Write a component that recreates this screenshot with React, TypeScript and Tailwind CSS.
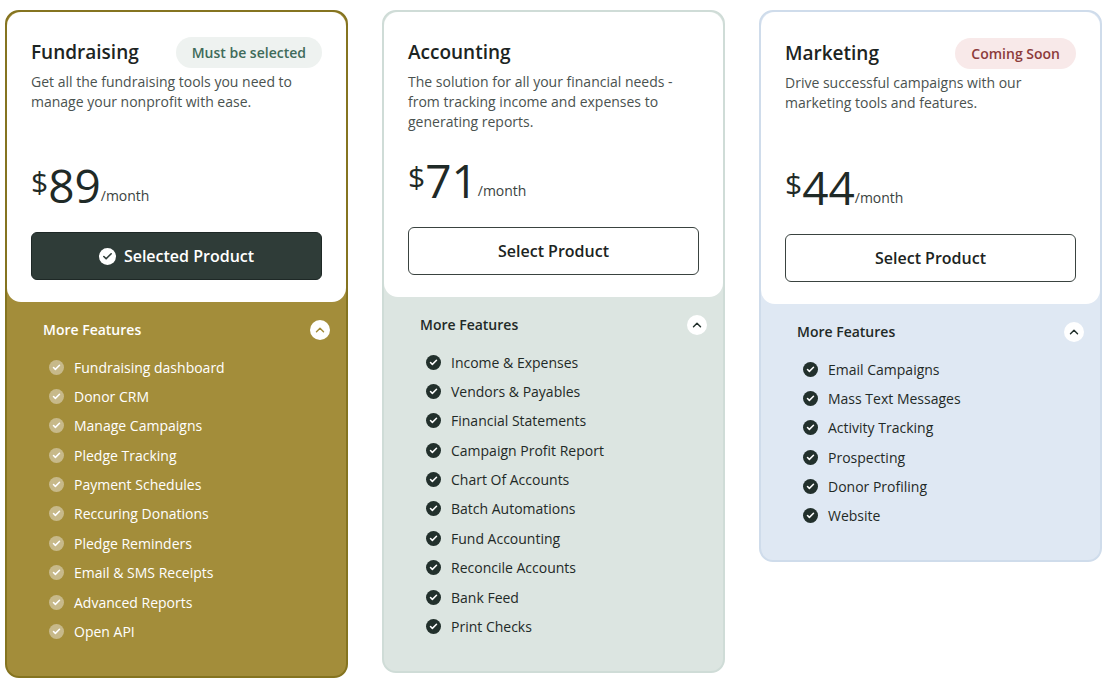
import { Check, ChevronUp } from 'lucide-react';

type Plan = {
  title: string;
  badge?: { text: string; cls: string };
  desc: string;
  price: string;
  selected?: boolean;
  features: string[];
  outer: string;
  white: string;
  heading: string;
  item: string;
  icon: string;
  iconCheck: string;
  chevron: string;
  pad: string;
};

const plans: Plan[] = [
  {
    title: 'Fundraising',
    badge: { text: 'Must be selected', cls: 'bg-[#eef2f0] text-[#3f6b5a]' },
    desc: 'Get all the fundraising tools you need to manage your nonprofit with ease.',
    price: '89',
    selected: true,
    features: ['Fundraising dashboard', 'Donor CRM', 'Manage Campaigns', 'Pledge Tracking', 'Payment Schedules', 'Reccuring Donations', 'Pledge Reminders', 'Email & SMS Receipts', 'Advanced Reports', 'Open API'],
    outer: 'bg-[#a38d3a] border-[#857420] h-[668px]',
    white: 'h-[290px] pt-[26px]',
    heading: 'text-white',
    item: 'text-white',
    icon: 'bg-[#c7b98a]',
    iconCheck: 'text-white',
    chevron: 'bg-white text-[#a38d3a]',
    pad: 'pt-[17px]',
  },
  {
    title: 'Accounting',
    desc: 'The solution for all your financial needs - from tracking income and expenses to generating reports.',
    price: '71',
    features: ['Income & Expenses', 'Vendors & Payables', 'Financial Statements', 'Campaign Profit Report', 'Chart Of Accounts', 'Batch Automations', 'Fund Accounting', 'Reconcile Accounts', 'Bank Feed', 'Print Checks'],
    outer: 'bg-[#dce5e1] border-[#cfdcd7] h-[663px]',
    white: 'h-[285px] pt-[26px]',
    heading: 'text-[#1f2a27]',
    item: 'text-[#1f2a27]',
    icon: 'bg-[#22302c]',
    iconCheck: 'text-white',
    chevron: 'bg-white text-[#22302c]',
    pad: 'pt-[17px]',
  },
  {
    title: 'Marketing',
    badge: { text: 'Coming Soon', cls: 'bg-[#f8e9e9] text-[#8c3b3b]' },
    desc: 'Drive successful campaigns with our marketing tools and features.',
    price: '44',
    features: ['Email Campaigns', 'Mass Text Messages', 'Activity Tracking', 'Prospecting', 'Donor Profiling', 'Website'],
    outer: 'bg-[#dfe8f3] border-[#cfdceb] h-[552px]',
    white: 'h-[292px] pt-[27px]',
    heading: 'text-[#1f2a27]',
    item: 'text-[#1f2a27]',
    icon: 'bg-[#22302c]',
    iconCheck: 'text-white',
    chevron: 'bg-white text-[#22302c]',
    pad: 'pt-[17px]',
  },
];

function Card({ p }: { p: Plan }) {
  return (
    <div className={`w-[343px] shrink-0 rounded-[14px] border-2 ${p.outer}`}>
      <div className={`flex flex-col rounded-[14px] bg-white px-6 ${p.white}`}>
        <div className="flex h-7 items-center justify-between">
          <h2 className="text-[19px] font-semibold text-[#1c2422]">{p.title}</h2>
          {p.badge && (
            <span className={`rounded-full px-4 py-[5px] text-[14px] font-semibold ${p.badge.cls}`}>{p.badge.text}</span>
          )}
        </div>
        <p className="mt-[6px] text-[14px] leading-[20px] text-[#4a524f]">{p.desc}</p>
        <div className="mt-auto flex items-end text-[#1f2a27]">
          <span className="mb-[4px] text-[30px] font-medium">$</span>
          <span className="text-[46px] font-medium leading-none">{p.price}</span>
          <span className="mb-[2px] text-[14px] text-[#3a4340]">/month</span>
        </div>
        {p.selected ? (
          <button className="mb-[22px] mt-[24px] flex h-12 items-center justify-center gap-2 rounded-md border border-[#1e2826] bg-[#2f3c38] text-[16px] font-semibold text-white">
            <span className="flex h-[17px] w-[17px] items-center justify-center rounded-full bg-white">
              <Check size={11} strokeWidth={3.5} className="text-[#2f3c38]" />
            </span>
            Selected Product
          </button>
        ) : (
          <button className="mb-[22px] mt-[24px] flex h-12 items-center justify-center rounded-md border border-[#3a4340] bg-white text-[16px] font-semibold text-[#1c2422]">
            Select Product
          </button>
        )}
      </div>
      <div className={`pl-9 pr-4 ${p.pad}`}>
        <div className="flex items-center justify-between">
          <span className={`text-[14px] font-semibold ${p.heading}`}>More Features</span>
          <span className={`flex h-[20px] w-[20px] items-center justify-center rounded-full ${p.chevron}`}>
            <ChevronUp size={14} strokeWidth={2.5} />
          </span>
        </div>
        <ul className="mt-[17px] flex flex-col gap-[9.4px] pl-[6px]">
          {p.features.map((f) => (
            <li key={f} className={`flex h-5 items-center gap-[10px] text-[14px] font-medium ${p.item}`}>
              <span className={`flex h-[15px] w-[15px] items-center justify-center rounded-full ${p.icon}`}>
                <Check size={9} strokeWidth={4} className={p.iconCheck} />
              </span>
              {f}
            </li>
          ))}
        </ul>
      </div>
    </div>
  );
}

export default function App() {
  return (
    <div className="flex h-[695px] w-[1108px] items-start gap-[34px] bg-white pl-[5px] pt-[10px]" style={{ fontFamily: '"Open Sans", sans-serif' }}>
      {plans.map((p) => (
        <Card key={p.title} p={p} />
      ))}
    </div>
  );
}
